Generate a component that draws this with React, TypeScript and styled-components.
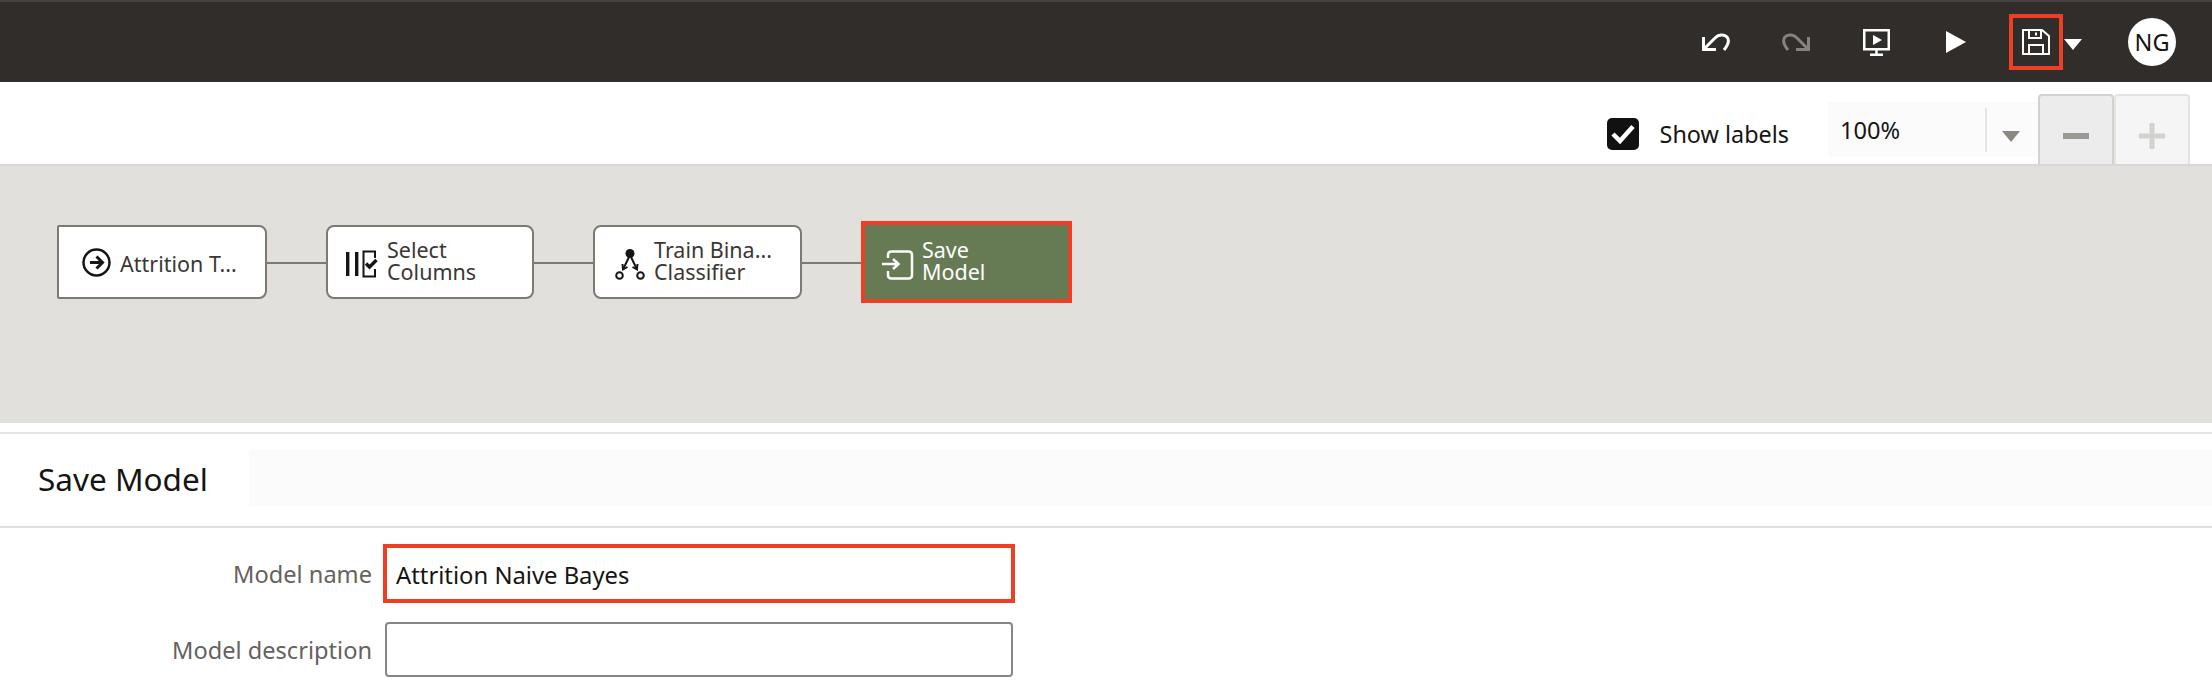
import React from 'react';
import styled, { createGlobalStyle } from 'styled-components';

const GlobalStyle = createGlobalStyle`
  html, body {
    margin: 0;
    padding: 0;
    background: #fff;
  }
  body {
    font-family: 'Noto Sans', 'Open Sans', sans-serif;
    color: #161513;
  }
`;

// Page frame
const Page = styled.div`
  width: 2212px;
  height: 698px;
  overflow: hidden;
  display: flex;
  flex-direction: column;
  background: #fff;
`;

const TopBar = styled.header`
  height: 82px;
  box-sizing: border-box;
  flex: none;
  display: flex;
  align-items: center;
  justify-content: flex-end;
  padding-right: 36px;
  background: #312d2a;
  border-top: 2px solid #45413e;
`;

const IconButton = styled.div<{ $dim?: boolean }>`
  width: 80px;
  height: 56px;
  display: flex;
  align-items: center;
  justify-content: center;
  color: ${(props) => (props.$dim ? '#85827f' : '#fff')};
`;

const SaveButton = styled.div`
  width: 54px;
  height: 56px;
  margin-left: 13px;
  box-sizing: border-box;
  border: 4px solid #ee3e24;
  display: flex;
  align-items: center;
  justify-content: center;
  color: #fff;
`;

const CaretDown = styled.div<{ $color: string }>`
  width: 0;
  height: 0;
  border-left: 9px solid transparent;
  border-right: 9px solid transparent;
  border-top: 11px solid ${(props) => props.$color};
`;

const SaveCaret = styled.div`
  margin-left: 1px;
  margin-top: 5px;
`;

const Avatar = styled.div`
  width: 48px;
  height: 48px;
  margin-left: 46px;
  border-radius: 50%;
  background: #fff;
  color: #161513;
  display: flex;
  align-items: center;
  justify-content: center;
  font-size: 23.5px;
`;

// Zoom and label toolbar
const Toolbar = styled.div`
  height: 84px;
  box-sizing: border-box;
  flex: none;
  display: flex;
  align-items: flex-end;
  justify-content: flex-end;
  padding-right: 22px;
  border-bottom: 2px solid #d9d7d3;
`;

const LabelToggle = styled.label`
  display: flex;
  align-items: center;
  height: 32px;
  margin-bottom: 14px;
  margin-right: 39px;
  font-size: 23.4px;
`;

const Checkbox = styled.span`
  width: 32px;
  height: 32px;
  margin-right: 21px;
  border-radius: 5px;
  background: #111;
  color: #fff;
  display: flex;
  align-items: center;
  justify-content: center;
`;

const ZoomSelect = styled.div`
  width: 210px;
  height: 55px;
  margin-bottom: 7px;
  box-sizing: border-box;
  padding-left: 12px;
  background: #fbfbfb;
  display: flex;
  align-items: center;
  font-size: 23.6px;
`;

const ZoomValue = styled.span`
  width: 145px;
`;

const SelectDivider = styled.span`
  width: 2px;
  height: 44px;
  background: #e6e5e3;
  margin-right: 15px;
`;

const SelectCaret = styled.span`
  margin-top: 14px;
`;

const ZoomButton = styled.div<{ $active?: boolean }>`
  width: 76px;
  height: 70px;
  box-sizing: border-box;
  padding-top: 12px;
  border: 2px solid ${(props) => (props.$active ? '#d4d2ce' : '#e5e4e1')};
  border-bottom: none;
  border-radius: 4px 4px 0 0;
  background: ${(props) => (props.$active ? '#ececec' : '#f5f5f5')};
  color: ${(props) => (props.$active ? '#9b9996' : '#d2d1cf')};
  display: flex;
  align-items: center;
  justify-content: center;
`;

// Flow canvas
const Canvas = styled.div`
  height: 257px;
  flex: none;
  box-sizing: border-box;
  padding: 55px 0 0 57px;
  background: #e2e0dc;
`;

const FlowRow = styled.div`
  display: flex;
  align-items: center;
  height: 82px;
`;

const Node = styled.div<{ $square?: boolean; $width: number; $inset: number }>`
  width: ${(props) => props.$width}px;
  height: 74px;
  box-sizing: border-box;
  flex: none;
  display: flex;
  align-items: center;
  padding-left: ${(props) => props.$inset}px;
  gap: 9px;
  background: #fff;
  border: 2px solid #7d7973;
  border-radius: ${(props) => (props.$square ? '2px 8px 8px 2px' : '8px')};
  color: #3a3734;
  font-size: 21.5px;
  line-height: 22px;
`;

const SelectedNode = styled(Node)`
  height: 82px;
  gap: 8px;
  background: #667a53;
  border: 4px solid #ee3e24;
  border-radius: 0;
  color: #fff;
`;

const NodeLabel = styled.span<{ $single?: boolean }>`
  white-space: pre-line;
  margin: ${(props) => (props.$single ? '3px 0 0' : '0 0 2px')};
`;

const NodeIcon = styled.span<{ $drop: number }>`
  display: flex;
  margin-top: ${(props) => props.$drop}px;
`;

const Connector = styled.div`
  width: 59px;
  height: 2px;
  margin-top: 2px;
  flex: none;
  background: #7d7973;
`;

// Properties panel
const PanelGap = styled.div`
  height: 9px;
  flex: none;
  border-bottom: 2px solid #e3e5e6;
`;

const PanelHeader = styled.div`
  height: 94px;
  box-sizing: border-box;
  flex: none;
  display: flex;
  align-items: center;
  padding-left: 38px;
  border-bottom: 2px solid #dfdfdd;
`;

const PanelTitle = styled.h2`
  width: 211px;
  margin: -3px 0 0;
  font-size: 31.5px;
  font-weight: 400;
  flex: none;
`;

const HeaderBand = styled.div`
  flex: 1;
  height: 56px;
  margin-top: -4px;
  background: #fbfbfb;
`;

const Form = styled.div`
  padding-top: 16px;
  display: grid;
  grid-template-columns: 372px 632px;
  column-gap: 11px;
  row-gap: 19px;
  align-items: center;
`;

const FieldLabel = styled.label`
  text-align: right;
  font-size: 23.6px;
  color: #65625f;
`;

const NameInput = styled.div`
  height: 59px;
  box-sizing: border-box;
  border: 4px solid #ee3e24;
  padding: 2px 0 0 9px;
  display: flex;
  align-items: center;
  font-size: 23.8px;
`;

const DescriptionInput = styled.div`
  height: 55px;
  margin: 0 2px;
  box-sizing: border-box;
  border: 2px solid #8a8681;
  border-radius: 4px;
`;

// Icons
const UndoIcon = () => (
  <svg width="28" height="18" viewBox="0 0 28 18" fill="none" stroke="currentColor" strokeWidth="3">
    <path d="M1.5 4v12.5H14" />
    <path d="M1.5 16.5L13 5C16 2 22 .5 25 4c3 3.5 1 8-3 13" />
  </svg>
);

const RedoIcon = () => (
  <svg width="28" height="18" viewBox="0 0 28 18" fill="none" stroke="currentColor" strokeWidth="3">
    <path d="M26.5 4v12.5H14" />
    <path d="M26.5 16.5L15 5C12 2 6 .5 3 4c-3 3.5-1 8 3 13" />
  </svg>
);

const PresentIcon = () => (
  <svg width="27" height="27" viewBox="0 0 27 27" fill="none" stroke="currentColor" strokeWidth="2.5">
    <rect x="1.25" y="1.25" width="24.5" height="19" />
    <path d="M13.5 21v5M7 25.75h13" />
    <path d="M10 6l9 5-9 5z" fill="currentColor" stroke="none" />
  </svg>
);

const PlayIcon = () => (
  <svg width="20" height="22" viewBox="0 0 20 22">
    <path d="M0 0l20 11L0 22z" fill="currentColor" />
  </svg>
);

const SaveIcon = () => (
  <svg width="28" height="26" viewBox="0 0 28 26" fill="none" stroke="currentColor" strokeWidth="2">
    <path d="M1 1h19l7 6v18H1z" />
    <path d="M7 1v8h12V1M14 3.5v3" />
    <path d="M7 25V16h14v9" />
  </svg>
);

const CheckIcon = () => (
  <svg width="24" height="20" viewBox="0 0 24 20" fill="none" stroke="currentColor" strokeWidth="4.5">
    <path d="M2 10l7 7L22 2.5" />
  </svg>
);

const MinusIcon = () => (
  <svg width="26" height="6" viewBox="0 0 26 6">
    <rect width="26" height="6" fill="currentColor" />
  </svg>
);

const PlusIcon = () => (
  <svg width="26" height="26" viewBox="0 0 26 26">
    <path d="M10.5 0h5v10.5H26v5H15.5V26h-5V15.5H0v-5h10.5z" fill="currentColor" />
  </svg>
);

const DataSourceIcon = () => (
  <svg width="29" height="29" viewBox="0 0 29 29" fill="none" stroke="#161513" strokeWidth="2.5">
    <circle cx="14.5" cy="14.5" r="13" />
    <path d="M8 14.5h12M14.5 8.5l6 6-6 6" strokeWidth="3" />
  </svg>
);

const SelectColumnsIcon = () => (
  <svg width="32" height="28" viewBox="0 0 32 28" fill="none" stroke="#161513">
    <path d="M1.7 2v24M10.7 2v24" strokeWidth="3.4" />
    <path d="M29 8V1.5H17.5v25H29V19" strokeWidth="2" />
    <path d="M20 13.5l3.5 3.5 7-7" strokeWidth="3.4" />
  </svg>
);

const ClassifierIcon = () => (
  <svg width="30" height="31" viewBox="0 0 30 31" fill="none" stroke="#161513" strokeWidth="2">
    <circle cx="15" cy="4.5" r="4.5" fill="#161513" stroke="none" />
    <circle cx="4.5" cy="26.5" r="3.3" />
    <circle cx="25.5" cy="26.5" r="3.3" />
    <path d="M14 8L8 20.5M16 8l6 12.5" />
    <path d="M7.5 15l.5 5.5 4.5-2.5M22.5 15l-.5 5.500-4.500-2.500" />
  </svg>
);

const SaveModelIcon = () => (
  <svg width="32" height="30" viewBox="0 0 32 30" fill="none" stroke="#fff" strokeWidth="2.5">
    <path d="M6 8V5q0-3.5 3.5-3.5h17q3.5 0 3.5 3.5v20q0 3.5-3.500 3.500h-17Q6 28.5 6 25v-4" />
    <path d="M0 14h16M11 9l5.500 5-5.500 5" />
  </svg>
);

const App: React.FC = () => {
  return (
    <Page>
      <GlobalStyle />
      <TopBar>
        <IconButton><UndoIcon /></IconButton>
        <IconButton $dim><RedoIcon /></IconButton>
        <IconButton><PresentIcon /></IconButton>
        <IconButton><PlayIcon /></IconButton>
        <SaveButton><SaveIcon /></SaveButton>
        <SaveCaret><CaretDown $color="#fff" /></SaveCaret>
        <Avatar>NG</Avatar>
      </TopBar>
      <Toolbar>
        <LabelToggle>
          <Checkbox><CheckIcon /></Checkbox>
          Show labels
        </LabelToggle>
        <ZoomSelect>
          <ZoomValue>100%</ZoomValue>
          <SelectDivider />
          <SelectCaret><CaretDown $color="#8b8781" /></SelectCaret>
        </ZoomSelect>
        <ZoomButton $active><MinusIcon /></ZoomButton>
        <ZoomButton><PlusIcon /></ZoomButton>
      </Toolbar>
      <Canvas>
        <FlowRow>
          <Node $square $width={210} $inset={23}>
            <NodeIcon $drop={0}><DataSourceIcon /></NodeIcon>
            <NodeLabel $single>Attrition T...</NodeLabel>
          </Node>
          <Connector />
          <Node $width={208} $inset={18}>
            <NodeIcon $drop={4}><SelectColumnsIcon /></NodeIcon>
            <NodeLabel>{'Select\nColumns'}</NodeLabel>
          </Node>
          <Connector />
          <Node $width={209} $inset={20}>
            <NodeIcon $drop={4}><ClassifierIcon /></NodeIcon>
            <NodeLabel>{'Train Bina...\nClassifier'}</NodeLabel>
          </Node>
          <Connector />
          <SelectedNode $width={211} $inset={17}>
            <NodeIcon $drop={6}><SaveModelIcon /></NodeIcon>
            <NodeLabel>{'Save\nModel'}</NodeLabel>
          </SelectedNode>
        </FlowRow>
      </Canvas>
      <PanelGap />
      <PanelHeader>
        <PanelTitle>Save Model</PanelTitle>
        <HeaderBand />
      </PanelHeader>
      <Form>
        <FieldLabel>Model name</FieldLabel>
        <NameInput>Attrition Naive Bayes</NameInput>
        <FieldLabel>Model description</FieldLabel>
        <DescriptionInput />
      </Form>
    </Page>
  );
};

export default App;
